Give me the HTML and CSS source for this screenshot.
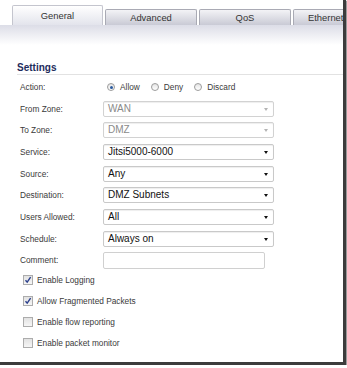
FILE: index.html
```
<!DOCTYPE html>
<html lang="en">
<head>
    <meta charset="UTF-8">
    <title>Rule Settings</title>
    <link rel="stylesheet" href="styles.css">
</head>
<body>

<div class="frame">
    <div class="tabs">
        <div class="tab active">General</div>
        <div class="tab">Advanced</div>
        <div class="tab">QoS</div>
        <div class="tab last">Ethernet</div>
    </div>
    <div class="band"></div>

    <h3 class="section">Settings</h3>

    <div class="form">
        <div class="label">Action:</div>
        <div class="radios">
            <span class="radio checked"></span><span class="opt">Allow</span>
            <span class="radio"></span><span class="opt">Deny</span>
            <span class="radio"></span><span class="opt">Discard</span>
        </div>

        <div class="label">From Zone:</div>
        <div class="select disabled">WAN</div>

        <div class="label">To Zone:</div>
        <div class="select disabled">DMZ</div>

        <div class="label">Service:</div>
        <div class="select">Jitsi5000-6000</div>

        <div class="label">Source:</div>
        <div class="select">Any</div>

        <div class="label">Destination:</div>
        <div class="select">DMZ Subnets</div>

        <div class="label">Users Allowed:</div>
        <div class="select">All</div>

        <div class="label">Schedule:</div>
        <div class="select">Always on</div>

        <div class="label">Comment:</div>
        <div class="input"></div>
    </div>

    <div class="checks">
        <div class="check-row">
            <span class="box"><svg width="8" height="8" viewBox="0 0 8 8"><path d="M1.5 4.2 L3.2 6.2 L6.6 1.2" fill="none" stroke="#2b3f8c" stroke-width="1.4"/></svg></span>
            <span class="opt">Enable Logging</span>
        </div>
        <div class="check-row">
            <span class="box"><svg width="8" height="8" viewBox="0 0 8 8"><path d="M1.5 4.2 L3.2 6.2 L6.6 1.2" fill="none" stroke="#2b3f8c" stroke-width="1.4"/></svg></span>
            <span class="opt">Allow Fragmented Packets</span>
        </div>
        <div class="check-row">
            <span class="box"></span>
            <span class="opt">Enable flow reporting</span>
        </div>
        <div class="check-row">
            <span class="box"></span>
            <span class="opt">Enable packet monitor</span>
        </div>
    </div>
</div>

</body>
</html>
```

FILE: styles.css
```
* {
    box-sizing: border-box;
    margin: 0;
    padding: 0;
}
body {
    background: #fff;
    font-family: "Liberation Sans", Arial, sans-serif;
}
.frame {
    width: 346px;
    height: 365px;
    background: #fff;
    border-right: 3px solid #3c3c3c;
    border-bottom: 3px solid #3c3c3c;
    box-shadow: 1px 1px 1px #9a9a9a;
    overflow: hidden;
}
.tabs {
    display: flex;
    align-items: flex-end;
    gap: 2px;
    padding: 5px 0 0 12px;
    height: 25px;
    white-space: nowrap;
}
.tab {
    flex: none;
    width: 92px;
    height: 16px;
    border: 1px solid #a9aab4;
    border-bottom: none;
    border-radius: 2px 2px 0 0;
    background: linear-gradient(#f3f3f6, #c9cad5);
    color: #333;
    font-size: 9.4px;
    line-height: 15px;
    text-align: center;
}
.tab.active {
    width: 91px;
    height: 20px;
    line-height: 19px;
    border-color: #c4c5ce;
    background: linear-gradient(#ffffff, #e3e4ec);
}
.tab.last {
    text-align: left;
    padding-left: 14px;
}
.band {
    height: 20px;
    background: linear-gradient(#dcdde7, #ffffff);
}
.section {
    margin: 17px 0 0 17px;
    font-size: 10px;
    font-weight: bold;
    line-height: 12px;
    color: #1e2c5c;
    border-bottom: 1px solid #e2e2e2;
}
.form {
    display: grid;
    grid-template-columns: 83px 171px;
    grid-auto-rows: 16px;
    row-gap: 5.67px;
    margin: 4px 0 0 20px;
    align-items: center;
}
.label, .opt {
    font-size: 8.3px;
    color: #3a3a3a;
}
.radios {
    display: flex;
    align-items: center;
    padding-left: 4px;
}
.radio {
    width: 8px;
    height: 8px;
    border: 1px solid #9c9c9c;
    border-radius: 50%;
    background: linear-gradient(#e4e4e4, #ffffff);
    margin-right: 5px;
    position: relative;
}
.radio.checked::after {
    content: "";
    position: absolute;
    left: 1.5px;
    top: 1.5px;
    width: 3px;
    height: 3px;
    border-radius: 50%;
    background: #2a5a9e;
}
.radios .opt {
    margin-right: 11px;
}
.select {
    position: relative;
    height: 16px;
    border: 1px solid #c9c9c9;
    border-radius: 2px;
    background: #fff;
    box-shadow: inset 0 1px 1px #eee;
    font-size: 10px;
    line-height: 14px;
    padding-left: 4px;
    color: #111;
}
.select::after {
    content: "";
    position: absolute;
    right: 5px;
    top: 6px;
    border-left: 2.5px solid transparent;
    border-right: 2.5px solid transparent;
    border-top: 3px solid #111;
}
.select.disabled {
    color: #8a8a8a;
    border-color: #d2d2d2;
}
.select.disabled::after {
    border-top-color: #b4b4b4;
}
.input {
    width: 162px;
    height: 17px;
    border: 1px solid #d0d0d0;
    border-radius: 2px;
    background: #fff;
}
.checks {
    margin: 7px 0 0 23px;
    display: flex;
    flex-direction: column;
    gap: 11px;
}
.check-row {
    display: flex;
    align-items: center;
    height: 10px;
}
.box {
    width: 10px;
    height: 10px;
    border: 1px solid #acacac;
    background: linear-gradient(#e2e2e2, #f6f6f6);
    margin-right: 4px;
    display: flex;
    align-items: center;
    justify-content: center;
}
```
